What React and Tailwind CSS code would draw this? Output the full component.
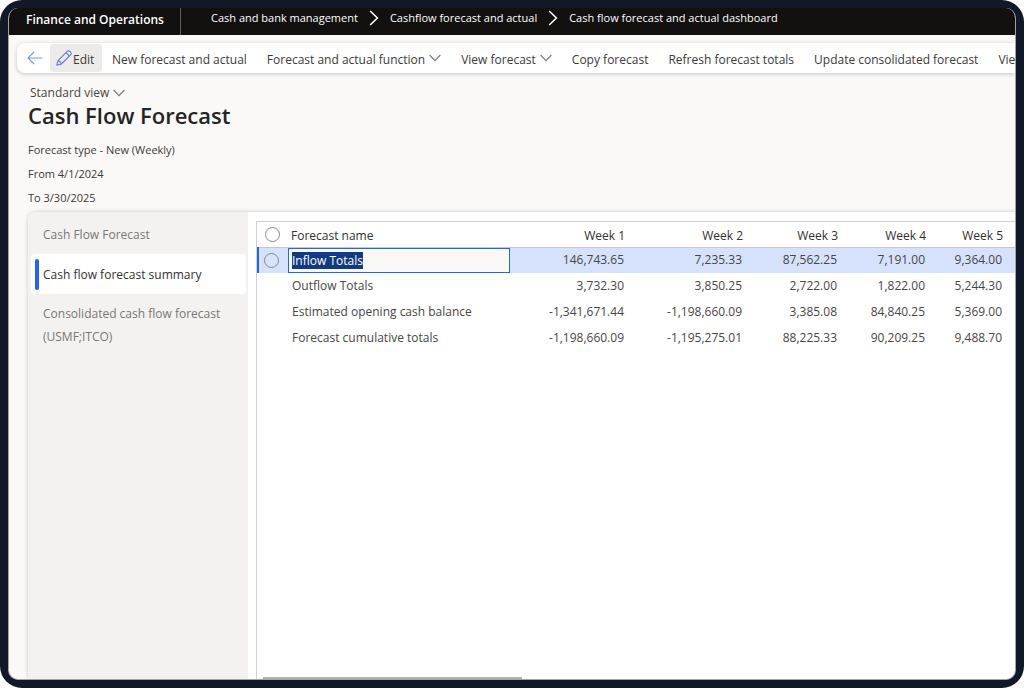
import { useEffect, useRef } from 'react';

const crumbs = [
  'Cash and bank management',
  'Cashflow forecast and actual',
  'Cash flow forecast and actual dashboard',
];

const actions = [
  { label: 'New forecast and actual' },
  { label: 'Forecast and actual function', menu: true },
  { label: 'View forecast', menu: true },
  { label: 'Copy forecast' },
  { label: 'Refresh forecast totals' },
  { label: 'Update consolidated forecast' },
  { label: 'View' },
];

const views = [
  { label: 'Cash Flow Forecast' },
  { label: 'Cash flow forecast summary', active: true },
  { label: 'Consolidated cash flow forecast (USMF;ITCO)' },
];

const weeks = ['Week 1', 'Week 2', 'Week 3', 'Week 4', 'Week 5'];

const rows = [
  { name: 'Inflow Totals', values: ['146,743.65', '7,235.33', '87,562.25', '7,191.00', '9,364.00'] },
  { name: 'Outflow Totals', values: ['3,732.30', '3,850.25', '2,722.00', '1,822.00', '5,244.30'] },
  { name: 'Estimated opening cash balance', values: ['-1,341,671.44', '-1,198,660.09', '3,385.08', '84,840.25', '5,369.00'] },
  { name: 'Forecast cumulative totals', values: ['-1,198,660.09', '-1,195,275.01', '88,225.33', '90,209.25', '9,488.70'] },
];

const ChevronDown = () => (
  <svg width="12" height="8" viewBox="0 0 12 8" fill="none" stroke="#77787a" strokeWidth="1.1" aria-hidden="true">
    <path d="M0.6 1 6 6.6 11.4 1" />
  </svg>
);

const ChevronRight = () => (
  <svg width="10" height="16" viewBox="0 0 10 16" fill="none" stroke="#ffffff" strokeWidth="1.5" aria-hidden="true">
    <path d="M1.2 1 8.4 8 1.2 15" />
  </svg>
);

const BackArrow = () => (
  <svg width="16" height="14" viewBox="0 0 16 14" fill="none" stroke="#7d96ea" strokeWidth="1.1" aria-hidden="true">
    <path d="M15.4 7H1M7 1 1 7l6 6" />
  </svg>
);

const Pencil = () => (
  <svg width="16" height="16" viewBox="0 0 16 16" fill="none" stroke="#5b7be8" strokeWidth="1.1" strokeLinejoin="round" aria-hidden="true">
    <path d="M0.8 15.2 2 10.6 11.2 1.4a1.9 1.9 0 0 1 2.7 0l0.7 0.7a1.9 1.9 0 0 1 0 2.7L5.4 14Z" />
    <path d="M10 2.6 13.4 6M2 10.6q2.6 0.6 3.4 3.4" />
  </svg>
);

const TopBar = () => (
  <header className="flex h-[27px] shrink-0 items-center bg-[#12110f] text-white">
    <div className="flex h-full w-[172px] shrink-0 items-center border-r border-[#605e5c] pb-1 pl-[17px] text-[12px] font-semibold">
      Finance and Operations
    </div>
    <nav aria-label="Breadcrumb" className="pb-2 pl-[30px]">
      <ol className="flex items-center gap-[11px] whitespace-nowrap text-[11px] leading-4 font-medium">
        {crumbs.map((crumb, i) => (
          <li key={crumb} className="flex items-center gap-[11px]">
            {i > 0 && <ChevronRight />}
            <a href="#">{crumb}</a>
          </li>
        ))}
      </ol>
    </nav>
  </header>
);

const ActionBar = () => (
  <div
    role="toolbar"
    aria-label="Actions"
    className="mt-2 ml-2 flex h-[30px] shrink-0 items-center overflow-hidden whitespace-nowrap rounded-l-lg bg-white pl-2.5 text-[12px] text-[#3b3a39] shadow-[0_1px_4px_rgba(0,0,0,0.22)]"
  >
    <button type="button" aria-label="Back" className="mr-[7px] shrink-0">
      <BackArrow />
    </button>
    <button type="button" className="flex h-7 w-[52px] shrink-0 items-center gap-px rounded-[3px] bg-[#edebe9] pl-1.5">
      <Pencil />
      <span className="pt-1">Edit</span>
    </button>
    <div className="ml-2.5 flex gap-5">
      {actions.map((action) => (
        <button key={action.label} type="button" className="flex shrink-0 items-center gap-1">
          <span className="pt-1">{action.label}</span>
          {action.menu && <ChevronDown />}
        </button>
      ))}
    </div>
  </div>
);

const SideNav = () => (
  <nav
    aria-label="Forecast views"
    className="w-[220px] shrink-0 rounded-tl-lg bg-[#f3f2f1] pt-[3px] pr-0.5 pl-[3px] text-[12px] leading-[23px]"
  >
    {views.map((view) =>
      view.active ? (
        <a key={view.label} href="#" aria-current="page" className="flex h-10 items-center gap-1 rounded bg-white pl-1 text-[#323130]">
          <span className="h-[31px] w-1 rounded-sm bg-[#2266e3]" />
          {view.label}
        </a>
      ) : (
        <a key={view.label} href="#" className="block py-2 pr-2 pl-3 text-[#797775]">
          {view.label}
        </a>
      )
    )}
  </nav>
);

const RowCheck = ({ label }) => (
  <input
    type="checkbox"
    aria-label={label}
    className="block size-[15px] appearance-none rounded-full border-[1.5px] border-[#8a8886] bg-transparent"
  />
);

const ForecastGrid = () => {
  const nameRef = useRef(null);

  // the grid opens with the first cell in edit mode
  useEffect(() => {
    nameRef.current.focus();
    nameRef.current.select();
  }, []);

  return (
    <table className="w-full table-fixed text-[12px] leading-4 text-[#484644]">
      <colgroup>
        <col className="w-[30px]" />
        <col />
        <col className="w-[127px]" />
        <col className="w-[118px]" />
        <col className="w-[95px]" />
        <col className="w-[88px]" />
        <col className="w-[77px]" />
      </colgroup>
      <thead>
        <tr className="h-[25px] border-b border-[#c8c6c4] text-[#323130]">
          <th className="pl-[7px]">
            <RowCheck label="Select all rows" />
          </th>
          <th className="pt-1 pl-[3px] text-left font-medium">Forecast name</th>
          {weeks.map((week) => (
            <th key={week} className="pt-1 pr-3 text-right font-medium">
              {week}
            </th>
          ))}
        </tr>
      </thead>
      <tbody>
        {rows.map((row, i) => (
          <tr key={row.name} className={i === 0 ? 'h-[26px] bg-[#d6e2fb]' : 'h-[26px]'}>
            <td className={i === 0 ? 'border-l-2 border-[#2266e3] pl-[5px]' : ''}>
              {i === 0 && <RowCheck label={`Select ${row.name}`} />}
            </td>
            <td className={i === 0 ? '' : 'pl-1'}>
              {i === 0 ? (
                <input
                  ref={nameRef}
                  type="text"
                  aria-label="Forecast name"
                  defaultValue={row.name}
                  className="block h-[25px] w-full border border-[#2266e3] bg-[#faf9f8] pl-[3px] leading-5 outline-none selection:bg-[#123a80] selection:text-white"
                />
              ) : (
                row.name
              )}
            </td>
            {row.values.map((value, j) => (
              <td key={weeks[j]} className="pr-[13px] text-right">
                {value}
              </td>
            ))}
          </tr>
        ))}
      </tbody>
    </table>
  );
};

export default function App() {
  return (
    <div className="h-screen bg-white font-['Open_Sans',sans-serif]">
      <div className="h-full rounded-[22px] bg-[#111827] p-2">
        <div className="flex h-full flex-col overflow-hidden rounded-[10px] border-x border-b border-[#a3a3a3] bg-[#faf9f8]">
          <TopBar />
          <ActionBar />
          <main className="flex min-h-0 grow flex-col pt-3 pl-[19px]">
            <button type="button" className="flex items-center gap-1 self-start pl-0.5 text-[12px] leading-4 text-[#484644]">
              Standard view
              <ChevronDown />
            </button>
            <h1 className="text-[22px] leading-7 font-semibold text-[#252423]">Cash Flow Forecast</h1>
            <div className="pt-[9px] text-[11px] leading-6 text-[#3b3a39]">
              <p>Forecast type - New (Weekly)</p>
              <p>From 4/1/2024</p>
              <p>To 3/30/2025</p>
            </div>
            <div className="mt-0.5 flex min-h-0 grow rounded-tl-lg bg-white shadow-[0_0_4px_rgba(0,0,0,0.2)]">
              <SideNav />
              <div className="mt-[9px] ml-2 flex min-w-0 grow flex-col justify-between border-t border-l border-[#d2d0ce]">
                <ForecastGrid />
                <div className="ml-1.5 h-0.5 w-[259px] bg-[#b3b0ad]" />
              </div>
            </div>
          </main>
        </div>
      </div>
    </div>
  );
}
